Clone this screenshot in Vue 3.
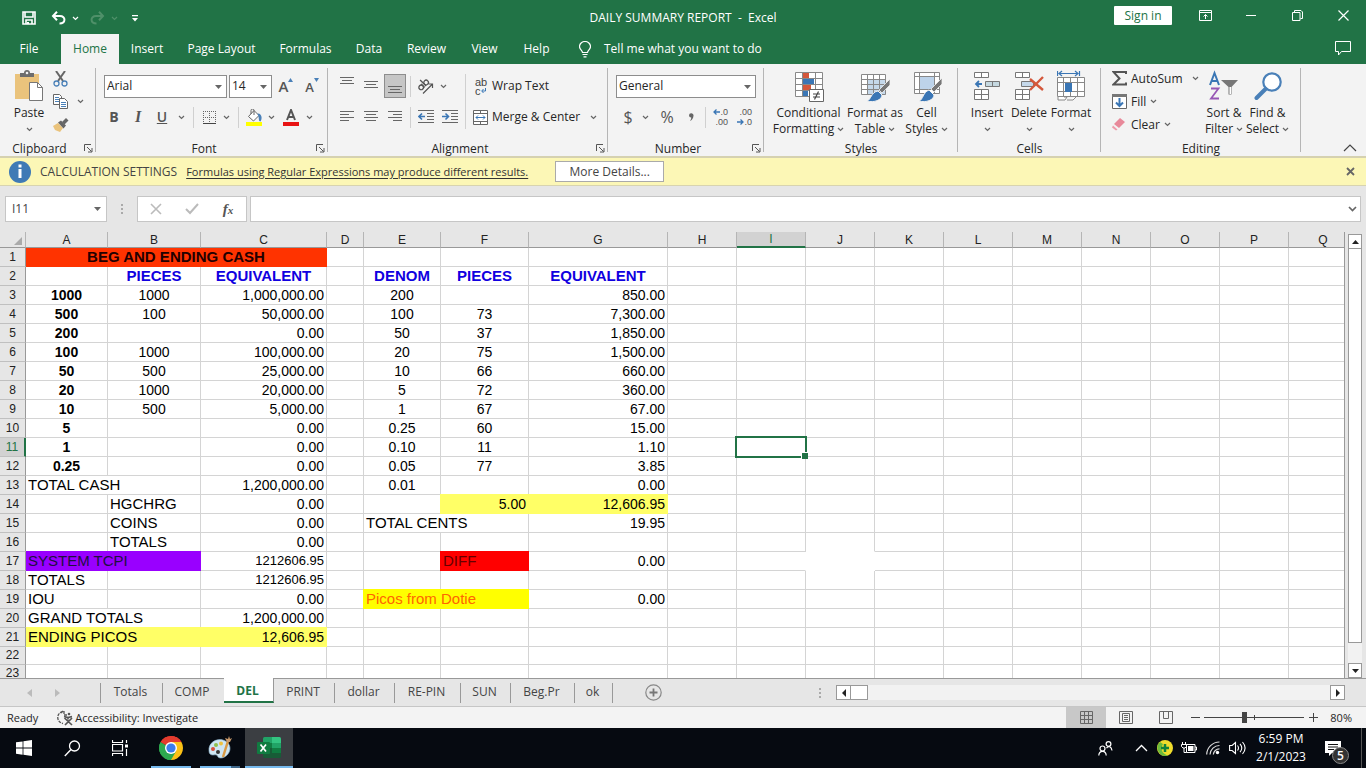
<script setup>
import { h, ref } from 'vue'

const Chevron = () =>
  h('svg', { class: 'chev', width: 7, height: 5, viewBox: '0 0 7 5', 'aria-hidden': 'true' }, [
    h('path', { d: 'M1 1l2.5 2.5L6 1', fill: 'none', stroke: 'currentColor', 'stroke-width': 1.2 })
  ])
const Caret = () =>
  h('svg', { class: 'caret', width: 7, height: 4, viewBox: '0 0 7 4', 'aria-hidden': 'true' }, [
    h('path', { d: 'M0 0h7L3.500 4z', fill: 'currentColor' })
  ])
const Launcher = () =>
  h('svg', { width: 9, height: 9, viewBox: '0 0 9 9', 'aria-hidden': 'true' }, [
    h('path', { d: 'M.5 7V.5H7M3 3l4.500 4.500M8 4v4H4', fill: 'none', stroke: '#555' })
  ])

const menu = [
  { name: 'File', w: 58 },
  { name: 'Home', w: 58 },
  { name: 'Insert', w: 56 },
  { name: 'Page Layout', w: 93 },
  { name: 'Formulas', w: 75 },
  { name: 'Data', w: 52 },
  { name: 'Review', w: 63 },
  { name: 'View', w: 53 },
  { name: 'Help', w: 51 }
]

const columns = [
  ['A', 82], ['B', 93], ['C', 126], ['D', 37], ['E', 77], ['F', 88], ['G', 139],
  ['H', 69], ['I', 69], ['J', 69], ['K', 69], ['L', 69], ['M', 69], ['N', 69],
  ['O', 69], ['P', 69], ['Q', 69]
]

const c = (t, cls = 'mid', span = 1) => ({ t, cls, span })
const n = (t) => c(t, 'num')
const data = {
  A1: c('BEG AND ENDING CASH', 'mid bold fill-orange', 3),
  B2: c('PIECES', 'mid bold blue'), C2: c('EQUIVALENT', 'mid bold blue'),
  E2: c('DENOM', 'mid bold blue'), F2: c('PIECES', 'mid bold blue'), G2: c('EQUIVALENT', 'mid bold blue'),
  A13: c('TOTAL CASH', 'txt', 2), B14: c('HGCHRG', 'txt'), B15: c('COINS', 'txt'), B16: c('TOTALS', 'txt'),
  A17: c('SYSTEM TCPI', 'txt fill fill-purple', 2), A18: c('TOTALS', 'txt'), A19: c('IOU', 'txt'),
  A20: c('GRAND TOTALS', 'txt', 2), A21: c('ENDING PICOS', 'txt fill fill-pale', 2), C21: c('12,606.95', 'num fill fill-pale'),
  C17: c('1212606.95', 'num small'), C18: c('1212606.95', 'num small'), C19: n('0.00'), C20: n('1,200,000.00'),
  F14: c('5.00', 'num fill lead fill-pale'), G14: c('12,606.95', 'num fill fill-pale'),
  E15: c('TOTAL CENTS', 'txt', 2), G15: n('19.95'),
  F17: c('DIFF', 'txt fill lead fill-red'), G17: n('0.00'),
  E19: c('Picos from Dotie', 'txt fill lead fill-yellow', 2), G19: n('0.00'),
  J16: c('', 'no-bottom'), I17: c('', 'no-right'), J17: c('', 'no-bottom no-right')
}
const fill = (col, start, values, cls) =>
  values.forEach((v, i) => { if (v) data[col + (start + i)] = c(v, cls) })
fill('A', 3, ['1000', '500', '200', '100', '50', '20', '10', '5', '1', '0.25'], 'mid strong')
fill('B', 3, ['1000', '100', '', '1000', '500', '1000', '500'], 'mid')
fill('C', 3, ['1,000,000.00', '50,000.00', '0.00', '100,000.00', '25,000.00', '20,000.00', '5,000.00',
  '0.00', '0.00', '0.00', '1,200,000.00', '0.00', '0.00', '0.00'], 'num')
fill('E', 3, ['200', '100', '50', '20', '10', '5', '1', '0.25', '0.10', '0.05', '0.01'], 'mid')
fill('F', 4, ['73', '37', '75', '66', '72', '67', '60', '11', '77'], 'mid')
fill('G', 3, ['850.00', '7,300.00', '1,850.00', '1,500.00', '660.00', '360.00', '67.00', '15.00', '1.10', '3.85', '0.00'], 'num')

const rows = Array.from({ length: 23 }, (_, i) => {
  const r = i + 1
  const cells = []
  for (let k = 0; k < columns.length;) {
    const id = columns[k][0] + r
    const cell = data[id] || c('', '')
    cells.push({ id, ...cell })
    k += cell.span
  }
  return { r, cells }
})

const sheets = [
  { name: 'Totals', w: 62 }, { name: 'COMP', w: 61 }, { name: 'DEL', w: 50 }, { name: 'PRINT', w: 61 },
  { name: 'dollar', w: 60 }, { name: 'RE-PIN', w: 66 }, { name: 'SUN', w: 50 }, { name: 'Beg.Pr', w: 64 },
  { name: 'ok', w: 38 }
]

const formula = ref('')
const zoom = ref(80)
</script>

<template>
  <div class="app">
    <header class="head">
      <div class="titlebar">
        <div class="quick">
          <button class="q save" aria-label="Save">
            <svg width="14" height="14" viewBox="0 0 14 14"><path d="M1 1h12v12H1zM3 1v5h8V1M4 13V9h6v4" fill="none" stroke="#fff" stroke-width="1.600" /><path d="M5 11h2v2H5z" fill="#fff" /></svg>
          </button>
          <button class="q undo" aria-label="Undo">
            <svg width="15" height="14" viewBox="0 0 15 14"><path d="M2 5h7c6 0 6 7.500-.5 7.500" fill="none" stroke="#fff" stroke-width="2" /><path d="M6 .8L2 5l4 4.200" fill="none" stroke="#fff" stroke-width="2" /></svg>
          </button>
          <button class="q arrow" aria-label="Undo list"><Chevron /></button>
          <button class="q redo dim" aria-label="Redo">
            <svg width="15" height="14" viewBox="0 0 15 14"><path d="M13 5H6C0 5 0 12.500 6.500 12.500M9 .8L13 5 9 9.200" fill="none" stroke="currentColor" stroke-width="2" /></svg>
          </button>
          <button class="q arrow dim" aria-label="Redo list"><Chevron /></button>
          <button class="q custom" aria-label="Customize toolbar">
            <svg width="6" height="7" viewBox="0 0 6 7"><path d="M0 0h6v1.300H0zM0 3h6L3 6.500z" fill="#fff" /></svg>
          </button>
        </div>
        <div class="title">DAILY SUMMARY REPORT&nbsp; -&nbsp; Excel</div>
        <div class="winctl">
          <button class="signin">Sign in</button>
          <button class="w" aria-label="Ribbon display options">
            <svg width="13" height="11" viewBox="0 0 13 11"><path d="M.5.5h12v10H.5zM.5 2.500h12M6.500 9V4.500M4.500 6.500l2-2 2 2" fill="none" stroke="#fff" /></svg>
          </button>
          <button class="w" aria-label="Minimize">
            <svg width="10" height="11" viewBox="0 0 10 11"><path d="M0 5.500h10" stroke="#fff" /></svg>
          </button>
          <button class="w" aria-label="Restore">
            <svg width="11" height="11" viewBox="0 0 11 11"><path d="M.5 2.500h7.500v8H.5zM2.500 2V.5H9l1.500 1.500v6.500H8.500" fill="none" stroke="#fff" /></svg>
          </button>
          <button class="w" aria-label="Close">
            <svg width="11" height="11" viewBox="0 0 11 11"><path d="M.5.5l10 10M10.500.5l-10 10" stroke="#fff" stroke-width="1.200" /></svg>
          </button>
        </div>
      </div>
      <nav class="menu">
        <button v-for="m in menu" :key="m.name" :class="{ on: m.name === 'Home' }" :style="{ width: m.w + 'px' }">{{ m.name }}</button>
        <button class="tell">
          <svg width="12" height="17" viewBox="0 0 12 17"><path d="M3.500 11.500c0-2-3-3-3-6a5.500 5 0 0 1 11 0c0 3-3 4-3 6zM3.500 13.500h5M4.500 15.800h3" fill="none" stroke="#fff" stroke-width="1.200" /></svg>
          Tell me what you want to do
        </button>
        <button class="comment" aria-label="Comments">
          <svg width="16" height="15" viewBox="0 0 16 15"><path d="M.5.5h15v10H6.500L3.500 14v-3.500h-3z" fill="none" stroke="#fff" /></svg>
        </button>
      </nav>
    </header>

    <section class="ribbon">
      <div class="group g-clip">
        <div class="body">
          <button class="big paste">
            <svg width="28" height="32" viewBox="0 0 28 32"><path d="M0 4h24v25H0z" fill="#eac37c" /><path d="M5 3h4a3 3 0 0 1 6 0h4v4H5z" fill="#6d6d6d" /><circle cx="12" cy="3" r="1.300" fill="#f2f2f2" /><path d="M14.500 12.500h8l5 5v13h-13z" fill="#fff" stroke="#777" /><path d="M22.500 12.500v5h5" fill="none" stroke="#777" /></svg>
            <span>Paste</span><span><Chevron /></span>
          </button>
          <div class="clipcol">
            <button aria-label="Cut"><svg width="15" height="16" viewBox="0 0 15 16"><path d="M3 0l7 10M12 0L5 10" stroke="#666" stroke-width="2" /><circle cx="3.500" cy="12.500" r="2.500" fill="none" stroke="#4a80b8" stroke-width="1.300" /><circle cx="11.500" cy="12.500" r="2.500" fill="none" stroke="#4a80b8" stroke-width="1.300" /></svg></button>
            <button aria-label="Copy"><svg width="16" height="15" viewBox="0 0 16 15"><path d="M.5.5h6l2 2v8h-8z" fill="#fff" stroke="#666" /><path d="M2 3.500h4M2 5.500h4M2 7.500h4" stroke="#4a80b8" /><path d="M6.500 4.500h5l3 3v7h-8z" fill="#fff" stroke="#666" /><path d="M8 8.500h5M8 10.500h5M8 12.500h5" stroke="#4a80b8" /></svg><Chevron /></button>
            <button aria-label="Format Painter"><svg width="16" height="14" viewBox="0 0 16 14"><path d="M0 8l5-3 5 5-3 4-5-2z" fill="#eac37c" /><path d="M5 4.500l3-2 5 5-2.500 3z" fill="#666" /><path d="M9 4l4-4 2.500 2.500-4 4z" fill="#666" /></svg></button>
          </div>
        </div>
        <div class="label">Clipboard<button class="launch" aria-label="Clipboard settings"><Launcher /></button></div>
      </div>

      <div class="group g-font">
        <div class="body rows">
          <div class="row r-combo">
            <label class="combo fontname"><select aria-label="Font"><option>Arial</option></select><Caret /></label>
            <label class="combo fontsize"><select aria-label="Font size"><option>14</option></select><Caret /></label>
            <button class="tool t-grow" aria-label="Increase font size"><b class="big-a">A</b><svg width="5" height="4" viewBox="0 0 5 4"><path d="M0 4h5L2.500 0z" fill="#4a80b8" /></svg></button>
            <button class="tool t-grow" aria-label="Decrease font size"><b class="small-a">A</b><svg width="5" height="4" viewBox="0 0 5 4"><path d="M0 0h5L2.500 4z" fill="#4a80b8" /></svg></button>
          </div>
          <div class="row r-style">
            <button class="tool ltr"><b>B</b></button>
            <button class="tool ltr"><i>I</i></button>
            <button class="tool ltr"><u>U</u></button>
            <button class="tool drop" aria-label="Underline styles"><Chevron /></button>
            <span class="sep"></span>
            <button class="tool t20" aria-label="Borders"><svg width="13" height="13" viewBox="0 0 13 13"><path d="M.5 0v12M6.500 0v12M12.500 0v12M0 .5h12M0 6.500h12" stroke="#666" stroke-dasharray="1 1" /><path d="M0 12.500h13" stroke="#444" /></svg></button>
            <button class="tool drop" aria-label="Border list"><Chevron /></button>
            <span class="sep"></span>
            <button class="tool t20" aria-label="Fill colour"><svg width="16" height="17" viewBox="0 0 16 17"><path d="M2.500 7.500l5.500-6 5 5-5.500 5.500z" fill="#fff" stroke="#666" /><path d="M5 5V1.500a1.500 1.500 0 0 1 3 0V6" fill="none" stroke="#666" /><path d="M11.500 4.500c4.500 0 5 5 3 8-2 0-1.500-3-2-5z" fill="#4a80b8" /><path d="M0 13h16v4H0z" fill="#ff0" /></svg></button>
            <button class="tool drop" aria-label="Fill colours"><Chevron /></button>
            <button class="tool t26" aria-label="Font colour"><svg width="16" height="17" viewBox="0 0 16 17"><path d="M4 11L8 1l4 10M5.500 8h5" fill="none" stroke="#555" stroke-width="2" /><path d="M0 13h16v4H0z" fill="#e81313" /></svg></button>
            <button class="tool t10" aria-label="Font colours"><Chevron /></button>
          </div>
        </div>
        <div class="label">Font<button class="launch" aria-label="Font settings"><Launcher /></button></div>
      </div>

      <div class="group g-align">
        <div class="body">
          <div class="rows">
            <div class="row">
              <button class="tool" aria-label="Top align"><svg width="14" height="20" viewBox="0 0 14 20"><path d="M0 1.500h14M2 4.500h10M0 7.500h14" stroke="#666" /></svg></button>
              <button class="tool" aria-label="Middle align"><svg width="14" height="20" viewBox="0 0 14 20"><path d="M0 5.500h14M2 8.500h10M0 11.500h14" stroke="#666" /></svg></button>
              <button class="tool sel" aria-label="Bottom align"><svg width="14" height="20" viewBox="0 0 14 20"><path d="M0 10.500h14M2 13.500h10M0 16.500h14" stroke="#666" /></svg></button>
              <span class="sep tight"></span>
              <button class="tool" aria-label="Orientation"><svg width="18" height="17" viewBox="0 0 18 17"><g transform="rotate(-45 7 8)" fill="none" stroke="#555" stroke-width="1.300"><circle cx="4" cy="7" r="2.300" /><path d="M6.500 4.500v5M8.500 1v8.500" /><circle cx="11" cy="7" r="2.300" /></g><path d="M6 15.500L15.500 6M11.500 6h4v4" fill="none" stroke="#555" stroke-width="1.200" /></svg></button>
              <button class="tool t10" aria-label="Orientation list"><Chevron /></button>
            </div>
            <div class="row">
              <button class="tool" aria-label="Align left"><svg width="14" height="12" viewBox="0 0 14 12"><path d="M0 .5h14M0 3.500h9M0 6.500h14M0 9.500h9" stroke="#666" /></svg></button>
              <button class="tool" aria-label="Center"><svg width="14" height="12" viewBox="0 0 14 12"><path d="M0 .5h14M2 3.500h10M0 6.500h14M2 9.500h10" stroke="#666" /></svg></button>
              <button class="tool" aria-label="Align right"><svg width="14" height="12" viewBox="0 0 14 12"><path d="M0 .5h14M5 3.500h9M0 6.500h14M5 9.500h9" stroke="#666" /></svg></button>
              <span class="sep tight"></span>
              <button class="tool" aria-label="Decrease indent"><svg width="16" height="14" viewBox="0 0 16 14"><path d="M0 .5h16M9 3.500h7M9 6.500h7M9 9.500h7M0 12.500h16" stroke="#666" /><path d="M7 6.500H1M4 3.500l-3 3 3 3" fill="none" stroke="#3a76b5" stroke-width="1.600" /></svg></button>
              <button class="tool" aria-label="Increase indent"><svg width="16" height="14" viewBox="0 0 16 14"><path d="M0 .5h16M9 3.500h7M9 6.500h7M9 9.500h7M0 12.500h16" stroke="#666" /><path d="M0 6.500h6M3.500 3.500l3 3-3 3" fill="none" stroke="#3a76b5" stroke-width="1.600" /></svg></button>
            </div>
          </div>
          <span class="vsep"></span>
          <div class="rows wrapcol">
            <button class="line"><span class="abc"><span>ab</span><span>c<svg width="5" height="5" viewBox="0 0 5 5"><path d="M4.500 0v3H1M2.500 1L.7 3l1.800 2" fill="none" stroke="#3a76b5" /></svg></span></span>Wrap Text</button>
            <button class="line"><svg class="ic" width="15" height="15" viewBox="0 0 15 15"><path d="M.5.500h14v14H.5zM.5 3.500h14M.5 11.500h14M7.500 0v3.500M7.500 11.500v3" fill="#fff" stroke="#666" /><path d="M3 7.500h9M5 5.500l-2 2 2 2M10 5.500l2 2-2 2" fill="none" stroke="#3a76b5" /></svg>Merge &amp; Center<Chevron /></button>
          </div>
        </div>
        <div class="label">Alignment<button class="launch" aria-label="Alignment settings"><Launcher /></button></div>
      </div>

      <div class="group g-num">
        <div class="body rows">
          <div class="row r-combo"><label class="combo numfmt"><select aria-label="Number format"><option>General</option></select><Caret /></label></div>
          <div class="row r-num">
            <button class="tool sym dollar">$</button>
            <button class="tool t10" aria-label="Currency list"><Chevron /></button>
            <button class="tool sym pct">%</button>
            <button class="tool comma" aria-label="Comma style"><svg width="5" height="8" viewBox="0 0 5 8"><path d="M0 2.200a2.200 2.200 0 1 1 4.500.5C4.300 5.500 3 7 1 8 2 6.500 2.300 5.500 2.200 4.400A2.200 2.200 0 0 1 0 2.200z" fill="#666" /></svg></button>
            <span class="sep"></span>
            <button class="tool dec" aria-label="Increase decimal"><span><svg width="7" height="6" viewBox="0 0 7 6"><path d="M7 3H1M3.500.5L1 3l2.500 2.500" fill="none" stroke="#3a76b5" stroke-width="1.300" /></svg>.0</span><span>.00</span></button>
            <button class="tool dec" aria-label="Decrease decimal"><span>.00</span><span><svg width="7" height="6" viewBox="0 0 7 6"><path d="M0 3h6M3.500.5L6 3 3.500 5.500" fill="none" stroke="#3a76b5" stroke-width="1.300" /></svg>.0</span></button>
          </div>
        </div>
        <div class="label">Number<button class="launch" aria-label="Number settings"><Launcher /></button></div>
      </div>

      <div class="group g-styles">
        <div class="body">
          <button class="big w73">
            <svg width="30" height="32" viewBox="0 0 30 32"><path d="M1.500 2.500h27v24H1.500zM1.500 8.500h27M1.500 14.500h27M1.500 20.500h27M8.500 2v25M21.500 2v25" fill="#fff" stroke="#888" /><path d="M9 3h6v5H9zM9 15h8v5H9z" fill="#d4573b" /><path d="M9 9h11v5H9zM9 21h5v5H9z" fill="#3a76b5" /><path d="M15.500 19.500h14v12h-14z" fill="#fff" stroke="#666" /><path d="M19 24h7M19 27h7M24.500 21.500l-4 8" stroke="#444" stroke-width="1.200" /></svg>
            <span>Conditional</span><span>Formatting <Chevron /></span>
          </button>
          <button class="big w58">
            <svg width="30" height="32" viewBox="0 0 30 32"><path d="M1.500 4.500h24v20h-24z" fill="#fff" /><path d="M8 10h18v15H8z" fill="#c5d8ea" /><path d="M1.500 4.500h24v20h-24zM1.500 9.500h24M1.500 14.500h24M1.500 19.500h24M7.500 4.500v20M13.500 4.500v20M19.500 4.500v20" fill="none" stroke="#888" /><path d="M30 9v6l-8 8-3-3z" fill="#777" stroke="#f2f2f2" stroke-width=".8" /><path d="M18 21l4 4c0 5-8 8-15 6 4-1 4-9 11-10z" fill="#3a76b5" stroke="#f2f2f2" /></svg>
            <span>Format as</span><span>Table <Chevron /></span>
          </button>
          <button class="big w43">
            <svg width="30" height="32" viewBox="0 0 30 32"><path d="M2.500 2.500h25v21h-25zM2.500 6.500h25M2.500 19.500h25M7.500 2v22M22.500 2v22" fill="#fff" stroke="#888" /><path d="M8 7h14v12H8z" fill="#bdd3ea" /><path d="M30 8v6l-8 8-3-3z" fill="#777" stroke="#f2f2f2" stroke-width=".8" /><path d="M17 20l5 5c0 5-8 8-15 6 4-1 4-9 10-11z" fill="#3a76b5" stroke="#f2f2f2" /></svg>
            <span>Cell</span><span>Styles <Chevron /></span>
          </button>
        </div>
        <div class="label">Styles</div>
      </div>

      <div class="group g-cells">
        <div class="body">
          <button class="big w42">
            <svg width="28" height="32" viewBox="0 0 28 32"><path d="M1.500 2.500h14v5h-14zM8.500 2.500v5M1.500 19.500h14v10h-14zM1.500 24.500h14M8.500 19.500v10" fill="#fff" stroke="#777" /><path d="M12.500 11.500h14v5h-14zM19.500 11.500v5" fill="#c5d8e0" stroke="#777" /><path d="M9 14H3M6 11l-3 3 3 3" fill="none" stroke="#3a76b5" stroke-width="1.800" /></svg>
            <span>Insert</span><span><Chevron /></span>
          </button>
          <button class="big w42">
            <svg width="30" height="32" viewBox="0 0 30 32"><path d="M1.500 2.500h14v5h-14zM8.500 2.500v5M1.500 19.500h14v10h-14zM1.500 24.500h14M8.500 19.500v10" fill="#fff" stroke="#777" /><path d="M7.500 11.500h12v5h-12z" fill="#c5d8ea" stroke="#777" /><path d="M16 9l13 11M29 7L16 20" stroke="#d4573b" stroke-width="2.400" /></svg>
            <span>Delete</span><span><Chevron /></span>
          </button>
          <button class="big w42">
            <svg width="28" height="32" viewBox="0 0 28 32"><path d="M.5 1v5M22.500 1v5M2 3.500h19M5 1L2 3.500 5 6M18 1l3 2.500L18 6" fill="none" stroke="#3a76b5" stroke-width="1.200" /><path d="M.5 7.500h27v19H.5zM.5 12.500h27M.5 21.500h27M6.500 7.500v19M13.500 7.500v19M20.500 7.500v19" fill="#fff" stroke="#888" /><path d="M8 13h7v9H8z" fill="#3a76b5" /><path d="M1 27v3h7l2-3h-3M10 30h6l3-3" fill="#fff" stroke="#888" /></svg>
            <span>Format</span><span><Chevron /></span>
          </button>
        </div>
        <div class="label">Cells</div>
      </div>

      <div class="group g-edit">
        <div class="body">
          <div class="editcol">
            <button class="auto"><svg width="15" height="15" viewBox="0 0 15 15"><path d="M14 3V1H1.500l6 6.500-6 6H14V11.500" fill="none" stroke="#555" stroke-width="2" /></svg>AutoSum<Chevron /></button>
            <button><svg width="15" height="15" viewBox="0 0 15 15"><path d="M.5.5h14v14H.5z" fill="#fff" stroke="#666" /><path d="M0 0h15v3H0z" fill="#777" /><path d="M7.500 4v8M4 8.500l3.500 3.500L11 8.500" fill="none" stroke="#3a76b5" stroke-width="2" /></svg>Fill<Chevron /></button>
            <button><svg width="15" height="15" viewBox="0 0 15 15"><path d="M8 1l5 4-6 6-5-4z" fill="#e8899a" /><path d="M1 8.500l4.500 4-1.500 1-4-3z" fill="#ee9cab" /></svg>Clear<Chevron /></button>
          </div>
          <button class="big w42">
            <svg width="30" height="32" viewBox="0 0 30 32"><path d="M1 15L5.500 3l4.500 12M2.500 11h6" fill="none" stroke="#3a76b5" stroke-width="2" /><path d="M2 18.500h7.500L2 28.500h8" fill="none" stroke="#9757b5" stroke-width="1.800" /><path d="M12 10h17l-6.500 7v7.500h-3V17z" fill="#777" /><path d="M20.500 17h1.500v7h-1.500z" fill="#fff" /></svg>
            <span>Sort &amp;</span><span>Filter <Chevron /></span>
          </button>
          <button class="big w45">
            <svg width="28" height="32" viewBox="0 0 28 32"><circle cx="18" cy="12" r="8.700" fill="#fff" stroke="#4a80b8" stroke-width="2.200" /><path d="M11.500 19L2.500 28" stroke="#4a80b8" stroke-width="4" stroke-linecap="round" /></svg>
            <span>Find &amp;</span><span>Select <Chevron /></span>
          </button>
        </div>
        <div class="label">Editing</div>
      </div>
      <button class="collapse" aria-label="Collapse ribbon"><svg width="14" height="8" viewBox="0 0 14 8"><path d="M1 7l6-6 6 6" fill="none" stroke="#444" stroke-width="1.200" /></svg></button>
    </section>

    <section class="message">
      <svg width="22" height="22" viewBox="0 0 22 22"><circle cx="11" cy="11" r="11" fill="#3f7ab5" /><path d="M9.500 3.500h3v3h-3zM9.500 8h3v9h-3z" fill="#fff" /></svg>
      <span class="m-title">CALCULATION SETTINGS</span>
      <a href="#">Formulas using Regular Expressions may produce different results.</a>
      <button class="more">More Details...</button>
      <button class="m-close" aria-label="Close message"><svg width="9" height="9" viewBox="0 0 9 9"><path d="M1 1l7 7M8 1L1 8" stroke="#666" stroke-width="1.800" /></svg></button>
    </section>

    <section class="fbar">
      <label class="namebox"><select aria-label="Name box"><option>I11</option></select><Caret /></label>
      <span class="dots"></span>
      <div class="fx">
        <button aria-label="Cancel"><svg width="12" height="12" viewBox="0 0 12 12"><path d="M1 1l10 10M11 1L1 11" stroke="#bbb" stroke-width="1.600" /></svg></button>
        <button aria-label="Enter"><svg width="14" height="12" viewBox="0 0 14 12"><path d="M1 6l4 4 8-9" fill="none" stroke="#bbb" stroke-width="2" /></svg></button>
        <button class="fn" aria-label="Insert function"><i>f<small>x</small></i></button>
      </div>
      <label class="formula"><input v-model="formula" aria-label="Formula" /><svg width="9" height="6" viewBox="0 0 9 6"><path d="M1 1l3.500 3.500L8 1" fill="none" stroke="#666" stroke-width="1.700" /></svg></label>
    </section>

    <main class="sheet">
      <div class="gridwrap">
        <table class="grid">
          <colgroup>
            <col class="rowcol" />
            <col v-for="[name, w] in columns" :key="name" :style="{ width: w + 'px' }" />
          </colgroup>
          <thead>
            <tr>
              <th class="corner"><svg width="8" height="8" viewBox="0 0 8 8"><path d="M8 0v8H0z" fill="#aaa" /></svg></th>
              <th v-for="[name] in columns" :key="name" scope="col" :class="{ cur: name === 'I' }">{{ name }}</th>
            </tr>
          </thead>
          <tbody>
            <tr v-for="row in rows" :key="row.r" :class="{ short: row.r > 21 }">
              <th scope="row" :class="{ cur: row.r === 11 }">{{ row.r }}</th>
              <td v-for="cell in row.cells" :key="cell.id" :colspan="cell.span" :class="[cell.cls, { active: cell.id === 'I11' }]">{{ cell.t }}<span v-if="cell.id === 'I11'" class="cursor"></span></td>
            </tr>
          </tbody>
        </table>
      </div>
      <div class="vscroll">
        <button aria-label="Scroll up"><svg width="7" height="4" viewBox="0 0 7 4"><path d="M0 4h7L3.500 0z" fill="#222" /></svg></button>
        <div class="vthumb"></div>
        <div class="vtrack"></div>
        <button aria-label="Scroll down"><svg width="7" height="4" viewBox="0 0 7 4"><path d="M0 0h7L3.500 4z" fill="#222" /></svg></button>
      </div>
    </main>

    <section class="tabs">
      <div class="tabnav">
        <button aria-label="Previous sheet"><svg width="5" height="8" viewBox="0 0 5 8"><path d="M5 0v8L0 4z" fill="#bbb" /></svg></button>
        <button aria-label="Next sheet"><svg width="5" height="8" viewBox="0 0 5 8"><path d="M0 0v8l5-4z" fill="#bbb" /></svg></button>
      </div>
      <button v-for="s in sheets" :key="s.name" class="tab" :class="{ on: s.name === 'DEL' }" :style="{ width: s.w + 'px' }">{{ s.name }}</button>
      <button class="add" aria-label="New sheet"><svg width="17" height="17" viewBox="0 0 17 17"><circle cx="8.500" cy="8.500" r="7.700" fill="none" stroke="#888" stroke-width="1.200" /><path d="M8.500 4.500v8M4.500 8.500h8" stroke="#777" stroke-width="1.800" /></svg></button>
      <span class="dots"></span>
      <div class="hscroll">
        <button aria-label="Scroll left"><svg width="4" height="8" viewBox="0 0 4 8"><path d="M4 0v8L0 4z" fill="#222" /></svg></button>
        <div class="hthumb"></div>
        <button aria-label="Scroll right"><svg width="4" height="8" viewBox="0 0 4 8"><path d="M0 0v8l4-4z" fill="#222" /></svg></button>
      </div>
    </section>

    <footer class="status">
      <span>Ready</span>
      <svg class="acc" width="17" height="16" viewBox="0 0 17 16"><path d="M6 1.500C-1 3-1 12 6 13.500M4 3l2.500-2.500M7 1v4h3" fill="none" stroke="#555" stroke-width="1.300" stroke-dasharray="3 1" /><circle cx="12" cy="4" r="1.300" fill="#555" /><path d="M7 6.500l4 1 4-1M11 7.500v2M7.500 8l7.500 7M15 8l-7 7" fill="none" stroke="#555" stroke-width="1.700" /></svg>
      <span>Accessibility: Investigate</span>
      <div class="views">
        <button class="on" aria-label="Normal view"><svg width="13" height="13" viewBox="0 0 13 13"><path d="M.5.5h12v12H.5zM.5 4.500h12M.5 8.500h12M4.500.5v12M8.500.5v12" fill="none" stroke="#666" /></svg></button>
        <button aria-label="Page layout view"><svg width="14" height="13" viewBox="0 0 14 13"><path d="M.5.500h13v12H.5zM3.500 2.500h7v8h-7zM5 4.500h4M5 6.500h4M5 8.500h4" fill="none" stroke="#666" /></svg></button>
        <button aria-label="Page break preview"><svg width="14" height="13" viewBox="0 0 14 13"><path d="M.5.5h13v12H.5zM4.500.5v7h5M9.500.5v7" fill="none" stroke="#666" /></svg></button>
      </div>
      <button class="zb" aria-label="Zoom out"><svg width="9" height="9" viewBox="0 0 9 9"><path d="M0 4.500h9" stroke="#444" /></svg></button>
      <input v-model="zoom" class="zoom" type="range" min="0" max="200" aria-label="Zoom" />
      <button class="zb" aria-label="Zoom in"><svg width="9" height="9" viewBox="0 0 9 9"><path d="M0 4.500h9M4.500 0v9" stroke="#444" /></svg></button>
      <span class="pc">80%</span>
    </footer>

    <footer class="taskbar">
      <button aria-label="Start"><svg width="16" height="16" viewBox="0 0 16 16"><path d="M0 2.300L6.600 1.400v6.200H0zM7.400 1.300L16 0v7.600H7.400zM0 8.400h6.600v6.300L0 13.700zM7.400 8.400H16V16l-8.600-1.200z" fill="#fff" /></svg></button>
      <button aria-label="Search"><svg width="17" height="17" viewBox="0 0 17 17"><circle cx="10.500" cy="6" r="5" fill="none" stroke="#fff" stroke-width="1.300" /><path d="M7 9.500L.8 16" stroke="#fff" stroke-width="1.400" /></svg></button>
      <button aria-label="Task view"><svg width="16" height="16" viewBox="0 0 16 16"><path d="M.5 0v2.500h10V0M.5 16v-2.500h10V16M.5 4.500h10v6.500H.5zM14.500 0v3M14.500 9v7" fill="none" stroke="#fff" stroke-width="1.200" /><path d="M13 4.500h3v3h-3z" fill="#fff" /></svg></button>
      <div class="apps">
        <button class="run" aria-label="Chrome"><svg width="24" height="24" viewBox="0 0 24 24"><path d="M12 12L1.610 6A12 12 0 0 1 22.390 6z" fill="#e33b2e" /><path d="M12 12V0a12 12 0 0 1 10.390 6H12z" fill="#e33b2e" /><path d="M12 12L22.390 6A12 12 0 0 1 12 24z" fill="#fbc116" /><path d="M12 12v12A12 12 0 0 1 1.610 6z" fill="#2da94f" /><path d="M12 6h10.390L17.200 15 12 24V12z" fill="#fbc116" /><path d="M1.610 6l5.190 9L12 18l5.200-3L12 24A12 12 0 0 1 1.610 6z" fill="#2da94f" /><path d="M1.610 6A12 12 0 0 1 22.390 6H12L6.800 9z" fill="#e33b2e" /><circle cx="12" cy="12" r="6" fill="#fff" /><circle cx="12" cy="12" r="4.600" fill="#3b7ded" /></svg></button>
        <button class="run split" aria-label="Paint"><svg width="24" height="24" viewBox="0 0 24 24"><path d="M1 15C0 7 8 2 15 4c7 2 9 9 5 14-3 4-8 5-10 3-1-3-3-2-5-2s-4-1-4-4z" fill="#cfe6f3" stroke="#8fb7d0" stroke-width=".6" /><circle cx="5" cy="13" r="2" fill="#d9503c" /><circle cx="8" cy="9" r="2" fill="#8fc04d" /><circle cx="13" cy="7.500" r="2" fill="#eec23e" /><circle cx="10" cy="16" r="2" fill="#333" /><path d="M20 5l-5 16" stroke="#d99a45" stroke-width="2.400" /><path d="M17 2l2 4h3l2-4-2 1-1-3-1 3z" fill="#c99a6b" /></svg></button>
        <button class="run front" aria-label="Excel"><svg width="24" height="22" viewBox="0 0 24 22"><path d="M6 1.500A1.500 1.500 0 0 1 7.500 0H15v6H6z" fill="#21a366" /><path d="M15 0h7.500A1.500 1.500 0 0 1 24 1.500V6h-9z" fill="#33c481" /><path d="M6 6h9v5H6z" fill="#107c41" /><path d="M15 6h9v5h-9z" fill="#21a366" /><path d="M6 11h9v10H7.500A1.500 1.500 0 0 1 6 19.500z" fill="#185c37" /><path d="M15 11h9v5h-9z" fill="#107c41" /><path d="M15 16h9v3.500a1.500 1.500 0 0 1-1.500 1.500H15z" fill="#185c37" /><rect y="5" width="13" height="12" rx="1" fill="#107c41" /><path d="M3.500 7.500l5.500 7M9 7.500l-5.500 7" stroke="#fff" stroke-width="1.700" /></svg></button>
      </div>
      <div class="tray">
        <button class="people" aria-label="People"><svg width="15" height="15" viewBox="0 0 15 15"><circle cx="4.500" cy="7.500" r="2.500" fill="none" stroke="#fff" stroke-width="1.200" /><path d="M.8 14.500C1 9 8 9 8.200 14.500M8.500 7.200c2-3 5-1.500 5.500 2.300" fill="none" stroke="#fff" stroke-width="1.200" /><circle cx="10.500" cy="3" r="2.400" fill="none" stroke="#fff" stroke-width="1.200" /></svg></button>
        <button class="t-up" aria-label="Hidden icons"><svg width="13" height="8" viewBox="0 0 13 8"><path d="M1 7l5.500-5.500L12 7" fill="none" stroke="#fff" stroke-width="1.300" /></svg></button>
        <button aria-label="Updates"><svg width="16" height="16" viewBox="0 0 16 16"><circle cx="8" cy="8" r="8" fill="#f0dd2c" /><path d="M3 2a8 8 0 0 0 8 13.400C5 14 3 9 6 4z" fill="#6cbb3c" /><path d="M8 4v8M4 8h8" stroke="#12823b" stroke-width="2.500" /></svg></button>
        <button aria-label="Battery"><svg width="16" height="12" viewBox="0 0 16 12"><path d="M5.500 2.500h8.500v8H5.500zM14 5h1.500v3H14M1.500 0v2.500M4.500 0v2.500M.5 2.500h5v2L4 6H2L.5 4.500zM3 6v4.500h2.500" fill="none" stroke="#fff" /><path d="M7 4h5.500v5H7z" fill="#fff" /></svg></button>
        <button aria-label="Network"><svg width="14" height="14" viewBox="0 0 14 14"><path d="M.7 13.500A12.800 12.800 0 0 1 13.500 1M4 13.500A9.500 9.500 0 0 1 13.500 4.500M7.300 13.500a6.200 6.200 0 0 1 6.200-5.700" fill="none" stroke="#ddd" stroke-width="1.200" /><circle cx="11.500" cy="11.500" r="1.700" fill="#fff" /></svg></button>
        <button aria-label="Volume"><svg width="17" height="14" viewBox="0 0 17 14"><path d="M.6 4.500h2.500L6.500 1.500v11L3.100 9.500H.6zM8.500 4.500c1.200 1.500 1.200 3.500 0 5M11 2.800c2.200 2.600 2.200 5.800 0 8.400M13.500 1c3.200 3.700 3.200 8.300 0 12" fill="none" stroke="#fff" stroke-width="1.100" /></svg></button>
        <div class="clock"><span>6:59 PM</span><span>2/1/2023</span></div>
        <button class="notes" aria-label="Notifications"><svg width="16" height="15" viewBox="0 0 16 15"><path d="M0 0h16v12H7l-3 3v-3H0z" fill="#fff" /><path d="M3 3.500h10M3 6h10M3 8.500h6" stroke="#111" /></svg><span class="badge">5</span></button>
        <span class="desk"></span>
      </div>
    </footer>
  </div>
</template>

<style>
body { margin: 0; overflow: hidden; }
</style>

<style scoped>
.app { display: flex; flex-direction: column; height: 100vh; overflow: hidden; font-family: "Open Sans", "Noto Sans", sans-serif; font-size: 12px; line-height: 16px; color: #262626; background: #e6e6e6; }
.app * { box-sizing: border-box; }
button, input, select { font: inherit; color: inherit; margin: 0; }
button { display: flex; align-items: center; justify-content: center; padding: 0; border: 0; background: none; white-space: nowrap; }
select { appearance: none; border: 0; background: transparent; width: 100%; height: 100%; padding: 0 2px; outline: 0; }
svg { display: block; flex: none; }
.chev { color: #666; }

.head { background: #217346; color: #fff; }
.titlebar { display: grid; grid-template-columns: 1fr auto 1fr; height: 34px; }
.quick { display: flex; align-items: center; padding-left: 22px; }
.quick .chev { color: inherit; }
.dim { color: #4f9069; }
.undo { margin-left: 15px; }
.arrow { width: 18px; }
.redo { margin-left: 6px; }
.custom { margin-left: 9px; }
.title { line-height: 36px; }
.winctl { display: flex; justify-content: flex-end; align-items: flex-start; }
.signin { width: 58px; height: 19px; margin: 6px 10px 0 0; background: #fff; color: #217346; border-radius: 1px; }
.w { width: 46px; height: 30px; }
.menu { display: flex; height: 30px; }
.menu button { flex: none; }
.menu .on { margin-left: 3px; background: #f3f3f3; color: #217346; }
.menu .tell { gap: 13px; margin-left: 17px; }
.menu .comment { margin: 0 15px 2px auto; }

.ribbon { display: flex; height: 94px; background: #f3f3f3; border-bottom: 2px solid #d5d1b0; }
.group { position: relative; flex: none; display: flex; flex-direction: column; justify-content: space-between; }
.group::after { content: ""; position: absolute; right: 0; top: 4px; bottom: 4px; width: 1px; background: #b5b5b5; }
.body { display: flex; flex: 1; }
.label { height: 15px; text-align: center; }
.launch { position: absolute; right: 3px; bottom: 3px; }
.g-clip { width: 96px; }
.g-font { width: 232px; }
.g-align { width: 280px; }
.g-num { width: 156px; }
.g-styles { width: 194px; }
.g-cells { width: 143px; }
.g-edit { width: 200px; }
.g-clip .label { padding-right: 17px; }
.g-font .label, .g-align .label, .g-num .label { padding-right: 16px; }
.collapse { margin: auto 9px 4px auto; }

.big { flex-direction: column; justify-content: flex-start; padding-top: 6px; flex: none; }
.big > svg { height: 32px; margin-bottom: 3px; }
.big > span { display: flex; align-items: center; gap: 3px; height: 16px; }
.w73 { width: 73px; }
.w58 { width: 58px; }
.w43 { width: 43px; }
.w42 { width: 42px; }
.w45 { width: 45px; }
.g-styles .body { padding-left: 8px; gap: 1px; }
.g-cells .body { padding-left: 8px; }
.g-edit .body { padding-left: 8px; }
.paste { width: 58px; }
.clipcol { display: flex; flex-direction: column; padding-top: 3px; }
.clipcol button { height: 23px; gap: 8px; justify-content: flex-start; margin-left: -5px; }
.editcol { width: 94px; padding: 3px 0 0 3px; }
.editcol button { height: 23px; gap: 4px; }
.editcol .auto .chev { margin-left: 5px; }

.rows { display: flex; flex-direction: column; gap: 7px; padding-top: 10px; }
.row { display: flex; align-items: center; height: 24px; }
.tool { width: 24px; height: 24px; flex: none; color: #555; font-size: 14px; }
.drop { width: 14px; }
.t20 { width: 20px; }
.t26 { width: 26px; }
.t10 { width: 10px; }
.sep { width: 1px; height: 21px; margin: 0 5px; background: #d0d0d0; }
.sep.tight { margin: 0 3px; }
.r-combo { padding-left: 8px; gap: 2px; }
.r-style { padding-left: 6px; }
.combo { position: relative; height: 23px; border: 1px solid #8d8d8d; background: #fff; }
.caret { position: absolute; right: 4px; top: 9px; color: #666; pointer-events: none; }
.fontname { width: 123px; }
.fontsize { width: 43px; }
.numfmt { width: 140px; }
.t-grow { align-items: flex-start; }
.t-grow svg { margin-top: 4px; }
.big-a { font-size: 15px; line-height: 24px; font-weight: 600; }
.small-a { font-size: 13px; line-height: 26px; font-weight: 600; }
.ltr b { font-weight: 700; }
.ltr i { font-weight: 700; font-family: "Liberation Serif", serif; font-size: 16px; }
.ltr u { font-weight: 600; }
.g-align .rows:first-child { padding-left: 7px; }
.sel { width: 22px; margin: 0 1px; background: #c6c6c6; border: 1px solid #8d8d8d; }
.vsep { width: 1px; margin: 10px 0 12px 3px; background: #d0d0d0; }
.wrapcol { padding-left: 7px; }
.line { height: 24px; justify-content: flex-start; gap: 4px; }
.line .chev { margin-left: 6px; }
.abc { display: flex; flex-direction: column; width: 15px; padding-left: 2px; font-family: "Liberation Sans", Arial, sans-serif; font-size: 11px; line-height: 8px; color: #444; }
.abc span { display: flex; align-items: center; height: 9px; }
.r-num { padding-left: 8px; }
.sym { font-size: 16px; }
.pct { width: 34px; }
.comma { width: 14px; }
.r-num .sep { margin: 0 2px 0 7px; }
.dec { flex-direction: column; align-items: flex-end; padding-right: 4px; font-family: "Liberation Sans", Arial, sans-serif; font-size: 9px; line-height: 10px; }
.dec span { display: flex; align-items: center; }

.message { display: flex; align-items: center; height: 28px; padding-left: 9px; background: #fcf7b6; border-bottom: 1px solid #d8d4b0; color: #444; }
.m-title { margin: 0 9px; }
.message a { width: 348px; color: #333; font-size: 11px; text-underline-offset: 2px; white-space: nowrap; }
.more { width: 109px; height: 21px; margin-left: 21px; background: #fff; border: 1px solid #aaa; }
.m-close { margin: 0 11px 0 auto; }

.fbar { display: flex; align-items: center; height: 46px; padding: 0 5px; }
.namebox { position: relative; width: 102px; height: 26px; background: #fff; border: 1px solid #c6c6c6; }
.namebox select { padding-left: 6px; color: #444; }
.namebox .caret { top: 10px; right: 5px; }
.dots { width: 2px; height: 10px; background: repeating-linear-gradient(#aaa 0 2px, transparent 2px 4px); }
.fbar .dots { margin: 0 14px; }
.fx { display: flex; width: 110px; height: 26px; background: #fff; border: 1px solid #c6c6c6; }
.fx button { flex: 1; }
.fn { font-family: "Liberation Serif", serif; font-size: 15px; font-weight: 600; color: #555; }
.fn small { font-size: 11px; }
.formula { position: relative; display: flex; flex: 1; align-items: center; height: 26px; margin-left: 3px; padding-right: 3px; background: #fff; border: 1px solid #c6c6c6; }
.formula input { flex: 1; border: 0; outline: 0; background: none; }

.sheet { display: flex; flex: 1; min-height: 0; }
.gridwrap { flex: 1; overflow: hidden; border-right: 1px solid #999; }
.grid { width: 0; min-width: 1358px; table-layout: fixed; border-collapse: separate; border-spacing: 0; background: #fff; font-family: "Liberation Sans", Arial, sans-serif; font-size: 14px; color: #000; }
.rowcol { width: 26px; }
.grid th { padding: 0; font-size: 12px; font-weight: 400; background: #e6e6e6; border-right: 1px solid #b5b5b5; border-bottom: 1px solid #999; color: #222; overflow: hidden; }
.grid thead th { height: 16px; line-height: 14px; }
.grid tbody th { height: 19px; line-height: 18px; border-right-color: #999; border-bottom-color: #c0c0c0; }
.grid .corner svg { margin: 3px 3px 0 auto; }
.grid th.cur { background: #d2d2d2; color: #217346; }
.grid thead th.cur { border-bottom: 2px solid #217346; }
.grid tbody th.cur { border-right: 2px solid #217346; }
.grid td { height: 19px; padding: 0 2px; line-height: 18px; border-right: 1px solid #d4d4d4; border-bottom: 1px solid #d4d4d4; white-space: nowrap; }
.grid .short th, .grid .short td { height: 18px; line-height: 17px; }
.grid .mid { text-align: center; }
.grid .num { text-align: right; }
.grid .txt { font-size: 15px; }
.grid .bold { font-size: 15px; font-weight: 700; }
.grid .strong { font-weight: 700; }
.grid .small { font-size: 13px; }
.grid .blue { color: #1000e0; }
.grid .fill { background: var(--fill); border-color: var(--fill); box-shadow: 0 -1px var(--fill); }
.grid .lead { box-shadow: 0 -1px var(--fill), -1px 0 var(--fill), -1px -1px var(--fill); }
.grid .fill-orange { background: #ff3300; border-color: #ff3300; color: #200; }
.grid .fill-purple { --fill: #9900ff; color: #201040; }
.grid .fill-pale { --fill: #ffff66; }
.grid .fill-red { --fill: #ff0000; color: #600; }
.grid .fill-yellow { --fill: #ffff00; color: #f60; }
.grid .no-bottom { border-bottom-color: transparent; }
.grid .no-right { border-right-color: transparent; }
.grid .active { position: relative; }
.cursor { position: absolute; inset: -2px; border: 2px solid #217346; }
.cursor::after { content: ""; position: absolute; right: -3px; bottom: -3px; width: 6px; height: 6px; background: #217346; border: 1px solid #fff; border-width: 1px 0 0 1px; }
.vscroll { display: flex; flex-direction: column; width: 21px; padding: 2px 4px 0 3px; }
.vscroll button { height: 15px; background: #fff; border: 1px solid #999; }
.vthumb { flex: 396; background: #fff; border: 1px solid #999; border-top: 0; }
.vtrack { flex: 20; background: #f2f2f2; }

.tabs { display: flex; align-items: center; height: 28px; border-top: 1px solid #999; color: #444; }
.tabnav { display: flex; gap: 23px; width: 101px; height: 20px; padding-left: 27px; border-right: 1px solid #999; }
.tab { height: 20px; padding: 0 2px 2px 0; border-right: 1px solid #999; }
.tab.on { align-self: flex-start; height: 25px; margin: -1px 0 0; padding: 3px 2px 0 0; background: #fff; border-bottom: 2px solid #217346; color: #217346; font-weight: 700; }
.tab:has(+ .on) { border-right-color: transparent; }
.add { margin-left: 32px; }
.tabs .dots { margin: 0 15px 0 auto; }
.hscroll { display: flex; width: 509px; height: 15px; margin-right: 21px; background: #f2f2f2; }
.hscroll button { width: 15px; background: #fff; border: 1px solid #999; }
.hthumb { width: 17px; margin-right: auto; background: #fff; border: 1px solid #999; border-left: 0; }

.status { display: flex; align-items: center; height: 22px; padding: 0 14px 0 7px; background: #f3f3f3; border-top: 1px solid #c6c6c6; font-size: 11px; }
.acc { margin: 0 1px 0 19px; }
.views { display: flex; margin-left: auto; height: 100%; }
.views button { width: 40px; }
.views .on { background: #c8c8c8; }
.zb { width: 18px; }
.zoom { appearance: none; width: 100px; height: 12px; background: linear-gradient(#444, #444) 50% 50% / 1px 5px no-repeat, linear-gradient(#444, #444) 50% 50% / 100% 1px no-repeat; }
.zoom::-webkit-slider-thumb { appearance: none; width: 5px; height: 11px; background: #444; }
.pc { width: 22px; margin-left: 8px; text-align: right; }

.taskbar { display: flex; height: 40px; background: #060a11; color: #fff; }
.taskbar > button, .apps button { width: 48px; }
.apps { display: flex; gap: 1px; margin-left: 3px; }
.run { position: relative; }
.run::after { content: ""; position: absolute; left: 4px; right: 4px; bottom: 0; height: 2px; background: #76b9ed; }
.split::after { background: linear-gradient(90deg, #76b9ed 31px, #3f678a 31px); }
.front { background: #3b3e42; }
.front::after { left: 0; right: 0; }
.tray { display: flex; margin-left: auto; }
.tray button { width: 24px; }
.tray .people { width: 48px; }
.clock { display: flex; flex-direction: column; justify-content: center; width: 64px; line-height: 18px; text-align: center; }
.tray .notes { position: relative; width: 40px; }
.badge { position: absolute; right: 4px; bottom: 4px; width: 17px; height: 17px; border-radius: 9px; background: #333; border: 1px solid #888; font-size: 12px; font-weight: 600; line-height: 15px; text-align: center; }
.desk { width: 5px; margin-left: 8px; border-left: 1px solid #555; }
</style>
